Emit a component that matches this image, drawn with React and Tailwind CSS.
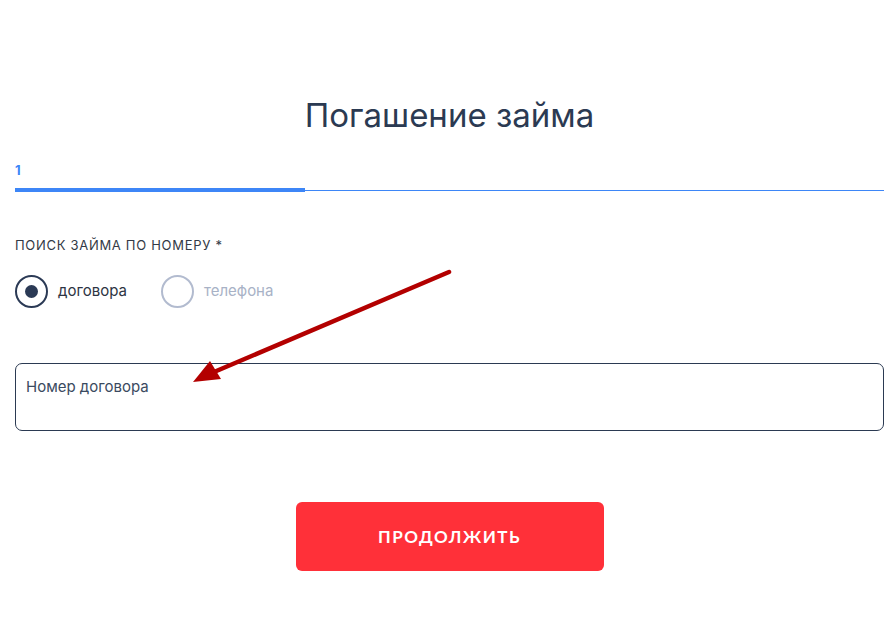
export default function App() {
  return (
    <div className="relative w-[895px] h-[634px] bg-white overflow-hidden" style={{ fontFamily: "Inter, 'Noto Sans', sans-serif" }}>
      <div className="ml-[15px] w-[869px] pt-[95px]">
        <h1 className="text-center text-[33px] leading-[40px] text-[#2b3a52] font-normal">Погашение займа</h1>
        <div className="mt-[27px] text-[13px] leading-[16px] font-bold text-[#3d86f7]">1</div>
        <div className="mt-[10px] flex items-center h-[4px]">
          <div className="w-[290px] h-[4px] bg-[#3d86f7]"></div>
          <div className="flex-1 h-[1px] bg-[#3d86f7]"></div>
        </div>
        <div className="mt-[45px] text-[13px] leading-[16px] tracking-[0.7px] text-[#333a46]">ПОИСК ЗАЙМА ПО НОМЕРУ *</div>
        <div className="mt-[22px] flex items-center">
          <div className="w-[33px] h-[33px] rounded-full border-2 border-[#2b3a55] flex items-center justify-center">
            <div className="w-[13px] h-[13px] rounded-full bg-[#2b3a55]"></div>
          </div>
          <span className="ml-[10px] text-[15px] text-[#2d3443]">договора</span>
          <div className="ml-[34px] w-[33px] h-[33px] rounded-full border-2 border-[#b2bbcf]"></div>
          <span className="ml-[10px] text-[15px] text-[#a8b2c6]">телефона</span>
        </div>
        <div className="mt-[55px] h-[68px] rounded-[7px] border border-[#2b3a52] px-[10px] pt-[10px]">
          <span className="text-[15px] text-[#3a4a60]">Номер договора</span>
        </div>
        <div className="mt-[71px] flex justify-center">
          <button className="w-[308px] h-[69px] rounded-[6px] bg-[#ff3039] text-white font-bold text-[17px] tracking-[1.5px]" style={{ fontFamily: "Lato, sans-serif" }}>ПРОДОЛЖИТЬ</button>
        </div>
      </div>
      <svg className="absolute left-0 top-0" width="895" height="634" viewBox="0 0 895 634">
        <line x1="449" y1="272" x2="214" y2="372" stroke="#b30000" strokeWidth="4.5" strokeLinecap="round" />
        <polygon points="193,382 210,361 221,379" fill="#b30000" />
      </svg>
    </div>
  );
}
